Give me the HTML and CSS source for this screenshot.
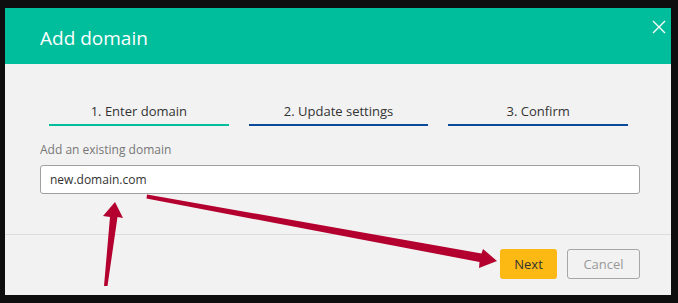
FILE: index.html
```html
<!DOCTYPE html>
<html lang="en">
<head>
    <meta charset="UTF-8">
    <meta name="viewport" content="width=device-width, initial-scale=1.0">
    <title>Add domain</title>
    <link rel="stylesheet" href="styles.css">
</head>
<body>

    <div class="modal">
        <!-- Header -->
        <div class="modal-header">
            <h1 class="modal-title">Add domain</h1>
            <button type="button" class="close-btn" aria-label="Close">
                <svg width="14" height="14" viewBox="0 0 14 14">
                    <path d="M1 1 L13 13 M13 1 L1 13" stroke="#ffffff" stroke-width="1.4" fill="none"/>
                </svg>
            </button>
        </div>

        <!-- Body -->
        <div class="modal-body">
            <div class="steps">
                <div class="step active">1. Enter domain</div>
                <div class="step">2. Update settings</div>
                <div class="step">3. Confirm</div>
            </div>

            <div class="form-group">
                <label for="domain">Add an existing domain</label>
                <input type="text" id="domain" value="new.domain.com">
            </div>
        </div>

        <!-- Footer -->
        <div class="modal-footer">
            <button type="button" class="btn btn-next">Next</button>
            <button type="button" class="btn btn-cancel">Cancel</button>
        </div>
    </div>

    <!-- Annotation arrows drawn over the screenshot -->
    <svg class="arrows" width="678" height="303" viewBox="0 0 678 303">
        <polygon points="104,286 107.5,286 117.5,217 123,218 115,202 103,216 110,217" fill="#b4002f"/>
        <polygon points="147,194.5 146.5,198.5 479.5,262 479,268 497,261 483,249 481.5,253.5" fill="#b4002f"/>
    </svg>

</body>
</html>
```

FILE: styles.css
```css
body {
    margin: 0;
    padding: 0;
    font-family: 'Open Sans', 'Liberation Sans', sans-serif;
    background-color: #0e0e0e;
    width: 678px;
    height: 303px;
    overflow: hidden;
    position: relative;
}

/* Modal box */
.modal {
    margin: 8px 0 0 5px;
    width: 666px;
    height: 287px;
    background-color: #f2f2f2;
    display: flex;
    flex-direction: column;
}

.modal-header {
    height: 56px;
    background-color: #00bd9c;
    display: flex;
    justify-content: space-between;
    align-items: flex-start;
    padding-left: 35px;
    box-sizing: border-box;
}

.modal-title {
    margin: 0;
    padding-top: 18px;
    font-size: 19px;
    line-height: 24px;
    font-weight: 500;
    color: #ffffff;
}

.close-btn {
    border: none;
    background: none;
    padding: 0;
    margin: 12px 5px 0 0;
    width: 14px;
    height: 14px;
    cursor: pointer;
}

.close-btn svg {
    display: block;
}

/* Steps */
.modal-body {
    padding: 38px 31px 0 35px;
    flex: 1;
    border-bottom: 1px solid #dcdcdc;
}

.steps {
    display: flex;
    gap: 20px;
    margin: 0 12px 0 9px;
}

.step {
    width: 180px;
    text-align: center;
    font-size: 13px;
    line-height: 18px;
    color: #333333;
    padding-bottom: 4px;
    border-bottom: 2px solid #0b4a9b;
}

.step.active {
    border-bottom-color: #00bd9c;
}

/* Form */
.form-group {
    margin-top: 16px;
    display: flex;
    flex-direction: column;
}

.form-group label {
    font-size: 12px;
    line-height: 16px;
    color: #777777;
    margin-bottom: 7px;
}

.form-group input {
    height: 29px;
    box-sizing: border-box;
    border: 1px solid #a0a0a0;
    border-radius: 3px;
    background-color: #ffffff;
    padding: 0 9px;
    font-family: inherit;
    font-size: 12px;
    color: #333333;
}

/* Footer buttons */
.modal-footer {
    display: flex;
    justify-content: flex-end;
    gap: 10px;
    padding: 14px 31px 16px 0;
}

.btn {
    height: 30px;
    border-radius: 3px;
    font-family: inherit;
    font-size: 13px;
    cursor: pointer;
}

.btn-next {
    width: 57px;
    border: none;
    background-color: #fdb913;
    color: #333333;
}

.btn-cancel {
    width: 73px;
    border: 1px solid #a6a6a6;
    background-color: #f2f2f2;
    color: #999999;
}

.arrows {
    position: absolute;
    top: 0;
    left: 0;
    pointer-events: none;
}
```
